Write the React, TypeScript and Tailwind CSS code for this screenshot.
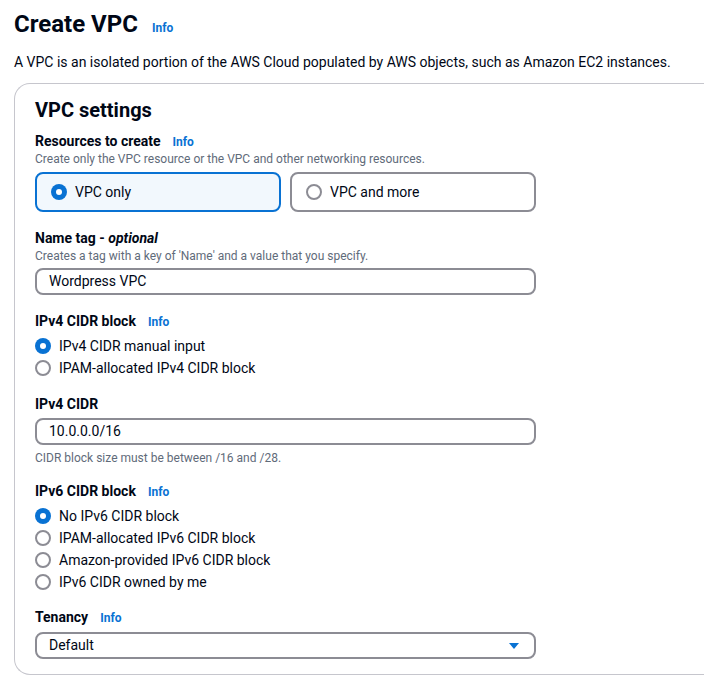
import React from "react";

const font = { fontFamily: 'Roboto, "Noto Sans", Arial, sans-serif' };

function Info({ className = "" }: { className?: string }) {
  return <span className={`text-[12px] font-bold text-[#0972d3] ${className}`}>Info</span>;
}

function Radio({ checked }: { checked?: boolean }) {
  return checked ? (
    <span className="w-[16px] h-[16px] rounded-full bg-[#0972d3] flex items-center justify-center shrink-0">
      <span className="w-[6px] h-[6px] rounded-full bg-white" />
    </span>
  ) : (
    <span className="w-[16px] h-[16px] rounded-full border-2 border-[#8c8c94] bg-white shrink-0" />
  );
}

function RadioRow({ label, checked }: { label: string; checked?: boolean }) {
  return (
    <div className="flex items-center gap-[8px] h-[22px]">
      <Radio checked={checked} />
      <span className="text-[14px] text-[#000716]">{label}</span>
    </div>
  );
}

export default function App() {
  return (
    <div className="w-[704px] h-[680px] bg-white overflow-hidden text-[#000716]" style={font}>
      <div className="pl-[14px]">
        <div className="flex items-baseline gap-[14px] pt-[8px]">
          <h1 className="text-[24px] font-bold leading-[32px]">Create VPC</h1>
          <Info />
        </div>
        <p className="text-[14px] leading-[20px] mt-[12px]">
          A VPC is an isolated portion of the AWS Cloud populated by AWS objects, such as Amazon EC2 instances.
        </p>
        <div className="mt-[11px] border border-[#c6c6cd] border-r-0 rounded-l-[16px] pl-[20px] pt-[12px] pb-[16px] h-[592px]">
          <h2 className="text-[20px] font-bold leading-[28px]">VPC settings</h2>

          <div className="mt-[7px] flex items-baseline gap-[12px]">
            <span className="text-[14px] font-bold leading-[20px]">Resources to create</span>
            <Info />
          </div>
          <div className="text-[12px] leading-[16px] text-[#5f6b7a]">
            Create only the VPC resource or the VPC and other networking resources.
          </div>
          <div className="flex gap-[9px] mt-[5px] w-[501px]">
            <div className="flex-1 h-[40px] rounded-[8px] border-2 border-[#0972d3] bg-[#f2f8fd] flex items-center gap-[8px] pl-[14px]">
              <Radio checked />
              <span className="text-[14px]">VPC only</span>
            </div>
            <div className="flex-1 h-[40px] rounded-[8px] border-2 border-[#8c8c94] bg-white flex items-center gap-[8px] pl-[14px]">
              <Radio />
              <span className="text-[14px]">VPC and more</span>
            </div>
          </div>

          <div className="mt-[16px] text-[14px] font-bold leading-[20px]">
            Name tag - <i>optional</i>
          </div>
          <div className="text-[12px] leading-[16px] text-[#5f6b7a]">
            Creates a tag with a key of 'Name' and a value that you specify.
          </div>
          <div className="mt-[4px] w-[501px] h-[27px] rounded-[8px] border-2 border-[#8c8c94] flex items-center pl-[12px] text-[14px]">
            Wordpress VPC
          </div>

          <div className="mt-[16px] flex items-baseline gap-[12px]">
            <span className="text-[14px] font-bold leading-[20px]">IPv4 CIDR block</span>
            <Info />
          </div>
          <div className="mt-[4px]">
            <RadioRow label="IPv4 CIDR manual input" checked />
            <RadioRow label="IPAM-allocated IPv4 CIDR block" />
          </div>

          <div className="mt-[15px] text-[14px] font-bold leading-[20px]">IPv4 CIDR</div>
          <div className="mt-[4px] w-[501px] h-[27px] rounded-[8px] border-2 border-[#8c8c94] flex items-center pl-[12px] text-[14px]">
            10.0.0.0/16
          </div>
          <div className="mt-[5px] text-[12px] leading-[16px] text-[#5f6b7a]">
            CIDR block size must be between /16 and /28.
          </div>

          <div className="mt-[15px] flex items-baseline gap-[12px]">
            <span className="text-[14px] font-bold leading-[20px]">IPv6 CIDR block</span>
            <Info />
          </div>
          <div className="mt-[4px]">
            <RadioRow label="No IPv6 CIDR block" checked />
            <RadioRow label="IPAM-allocated IPv6 CIDR block" />
            <RadioRow label="Amazon-provided IPv6 CIDR block" />
            <RadioRow label="IPv6 CIDR owned by me" />
          </div>

          <div className="mt-[14px] flex items-baseline gap-[12px]">
            <span className="text-[14px] font-bold leading-[20px]">Tenancy</span>
            <Info />
          </div>
          <div className="mt-[5px] w-[501px] h-[27px] rounded-[8px] border-2 border-[#8c8c94] flex items-center justify-between pl-[12px] pr-[14px] text-[14px]">
            <span>Default</span>
            <svg width="12" height="8" viewBox="0 0 12 8">
              <path d="M1 1 L11 1 L6 7 Z" fill="#0972d3" />
            </svg>
          </div>
        </div>
      </div>
    </div>
  );
}
